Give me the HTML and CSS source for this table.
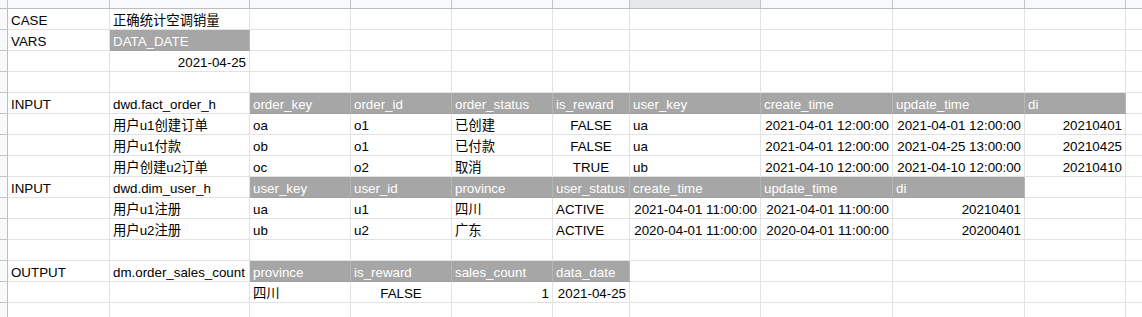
FILE: index.html
```html
<!DOCTYPE html>
<html>
<head>
<meta charset="utf-8">
<link rel="stylesheet" href="styles.css">
</head>
<body>
<div class="sheet">
  <div class="row ch"><span></span><span></span><span></span><span></span><span></span><span></span><span></span><span class="sel"></span><span></span><span></span><span></span><span></span></div>
  <div class="row"><span></span><span>CASE</span><span>正确统计空调销量</span><span></span><span></span><span></span><span></span><span></span><span></span><span></span><span></span><span></span></div>
  <div class="row"><span></span><span>VARS</span><span class="h">DATA_DATE</span><span></span><span></span><span></span><span></span><span></span><span></span><span></span><span></span><span></span></div>
  <div class="row"><span></span><span></span><span class="r">2021-04-25</span><span></span><span></span><span></span><span></span><span></span><span></span><span></span><span></span><span></span></div>
  <div class="row"><span></span><span></span><span></span><span></span><span></span><span></span><span></span><span></span><span></span><span></span><span></span><span></span></div>
  <div class="row"><span></span><span>INPUT</span><span>dwd.fact_order_h</span><span class="h">order_key</span><span class="h">order_id</span><span class="h">order_status</span><span class="h">is_reward</span><span class="h">user_key</span><span class="h">create_time</span><span class="h">update_time</span><span class="h">di</span><span></span></div>
  <div class="row"><span></span><span></span><span>用户u1创建订单</span><span>oa</span><span>o1</span><span>已创建</span><span class="c">FALSE</span><span>ua</span><span class="r">2021-04-01 12:00:00</span><span class="r">2021-04-01 12:00:00</span><span class="r">20210401</span><span></span></div>
  <div class="row"><span></span><span></span><span>用户u1付款</span><span>ob</span><span>o1</span><span>已付款</span><span class="c">FALSE</span><span>ua</span><span class="r">2021-04-01 12:00:00</span><span class="r">2021-04-25 13:00:00</span><span class="r">20210425</span><span></span></div>
  <div class="row"><span></span><span></span><span>用户创建u2订单</span><span>oc</span><span>o2</span><span>取消</span><span class="c">TRUE</span><span>ub</span><span class="r">2021-04-10 12:00:00</span><span class="r">2021-04-10 12:00:00</span><span class="r">20210410</span><span></span></div>
  <div class="row"><span></span><span>INPUT</span><span>dwd.dim_user_h</span><span class="h">user_key</span><span class="h">user_id</span><span class="h">province</span><span class="h">user_status</span><span class="h">create_time</span><span class="h">update_time</span><span class="h">di</span><span></span><span></span></div>
  <div class="row"><span></span><span></span><span>用户u1注册</span><span>ua</span><span>u1</span><span>四川</span><span>ACTIVE</span><span class="r">2021-04-01 11:00:00</span><span class="r">2021-04-01 11:00:00</span><span class="r">20210401</span><span></span><span></span></div>
  <div class="row"><span></span><span></span><span>用户u2注册</span><span>ub</span><span>u2</span><span>广东</span><span>ACTIVE</span><span class="r">2020-04-01 11:00:00</span><span class="r">2020-04-01 11:00:00</span><span class="r">20200401</span><span></span><span></span></div>
  <div class="row"><span></span><span></span><span></span><span></span><span></span><span></span><span></span><span></span><span></span><span></span><span></span><span></span></div>
  <div class="row"><span></span><span>OUTPUT</span><span>dm.order_sales_count</span><span class="h">province</span><span class="h">is_reward</span><span class="h">sales_count</span><span class="h">data_date</span><span></span><span></span><span></span><span></span><span></span></div>
  <div class="row"><span></span><span></span><span></span><span>四川</span><span class="c">FALSE</span><span class="r">1</span><span class="r">2021-04-25</span><span></span><span></span><span></span><span></span><span></span></div>
  <div class="row"><span></span><span></span><span></span><span></span><span></span><span></span><span></span><span></span><span></span><span></span><span></span><span></span></div>
</div>
</body>
</html>
```

FILE: styles.css
```css
html, body {
  margin: 0;
  padding: 0;
  background: #fff;
  overflow: hidden;
}

.sheet {
  --cols: 8px 102px 140px 101px 101px 101px 77px 131px 132px 132px 101px 16px;
  display: flex;
  flex-direction: column;
  width: 1142px;
  overflow: hidden;
  font-family: "Liberation Sans", Arial, "Noto Sans CJK SC", sans-serif;
  font-size: 13.33px;
  color: #000;
}

.row {
  display: grid;
  grid-template-columns: var(--cols);
  height: 21px;
}

.row > span {
  box-sizing: border-box;
  border-right: 1px solid #e2e2e2;
  border-bottom: 1px solid #e2e2e2;
  padding: 3px 3px 0 3px;
  line-height: 17px;
  white-space: nowrap;
  overflow: hidden;
}

.row > span:last-child {
  border-right: none;
}

.row > span:first-child {
  padding: 0;
  background: #f8f9fa;
  border-right: 1px solid #bdbdbd;
  border-bottom: 1px solid #c4c4c4;
}

.row.ch {
  height: 9px;
}

.row.ch > span {
  padding: 0;
  background: #f8f9fa;
  border-right: 1px solid #c4c4c4;
  border-bottom: 1px solid #bdbdbd;
}

.row.ch > span:last-child {
  border-right: none;
}

.row.ch > span.sel {
  background: #e6e7ea;
}

.row > span.h {
  background: #a6a6a6;
  color: #fff;
  border-right-color: #b6b6b6;
  border-bottom-color: #a0a0a0;
}

.row > span.r {
  text-align: right;
}

.row > span.c {
  text-align: center;
}
```
